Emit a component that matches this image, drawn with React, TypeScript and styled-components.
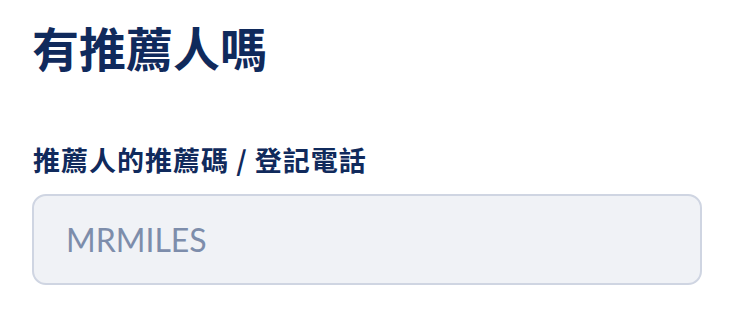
import React from 'react'
import styled, { createGlobalStyle } from 'styled-components'

const GlobalStyle = createGlobalStyle`
  body {
    margin: 0;
    background: #ffffff;
    font-family: 'Noto Sans CJK TC', 'Noto Sans', sans-serif;
  }
`

export default function App() {
  return (
    <>
      <GlobalStyle />
      <Section>
        <Title>有推薦人嗎</Title>
        <Field>
          <Label htmlFor="referrer">推薦人的推薦碼 / 登記電話</Label>
          <Input id="referrer" placeholder="MRMILES" />
        </Field>
      </Section>
    </>
  )
}

const Section = styled.section`
  display: flex;
  flex-direction: column;
  gap: 66px;
  padding: 17px 40px 0 32px;
`

const Title = styled.h2`
  margin: 0;
  font-size: 47px;
  line-height: 60px;
  font-weight: 700;
  color: #102a5c;
`

const Field = styled.div`
  display: flex;
  flex-direction: column;
  gap: 17px;
`

const Label = styled.label`
  font-size: 27px;
  line-height: 34px;
  font-weight: 700;
  letter-spacing: 1px;
  color: #102a5c;
  padding-left: 1px;
`

const Input = styled.input`
  box-sizing: border-box;
  width: 670px;
  height: 91px;
  padding: 0 32px;
  border: 2px solid #cfd5e2;
  border-radius: 14px;
  background: #f0f2f6;
  font-family: Lato, 'Noto Sans', sans-serif;
  font-size: 32px;
  color: #102a5c;
  outline: none;

  &::placeholder {
    color: #7d8dab;
  }
`
